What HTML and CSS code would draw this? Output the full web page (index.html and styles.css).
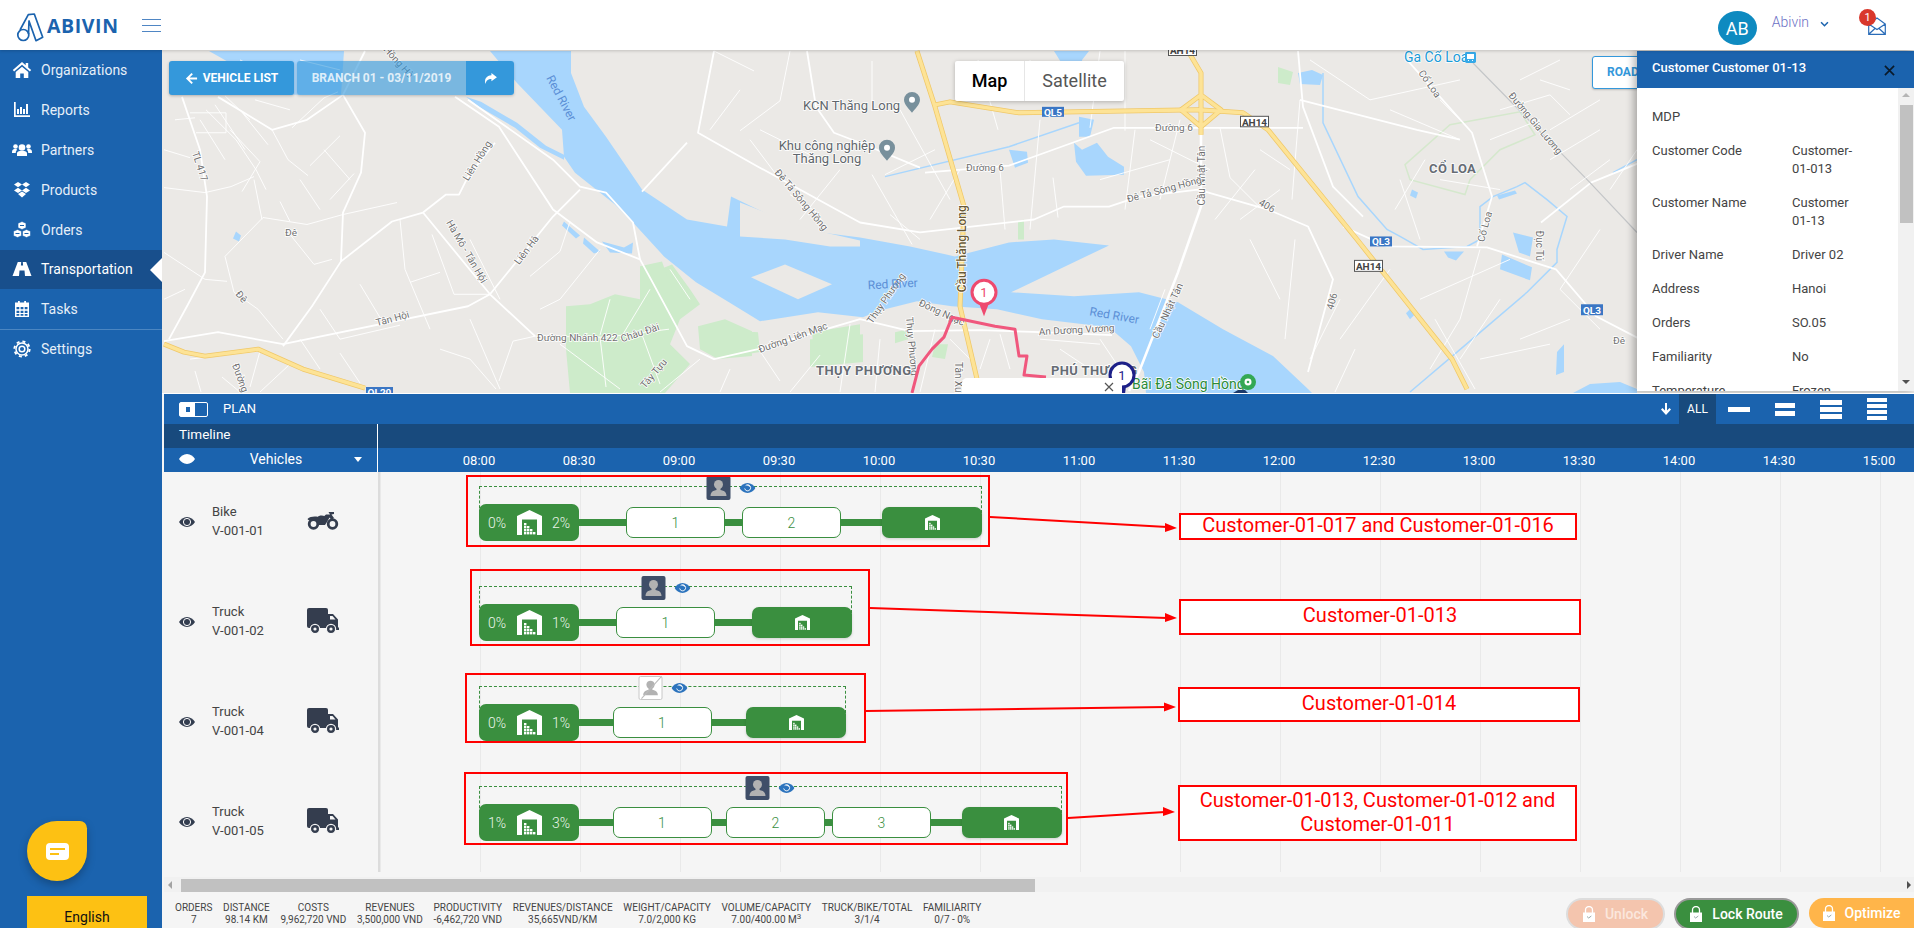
FILE: index.html
```html
<!DOCTYPE html>
<html lang="en">
<head>
<meta charset="utf-8">
<title>Abivin - Transportation</title>
<link rel="stylesheet" href="styles.css">
</head>
<body>
<svg class="defs" width="0" height="0" aria-hidden="true">
  <symbol id="i-eye" viewBox="0 0 16 12"><path d="M8 1C4.5 1 1.8 3.2 0 6c1.8 2.8 4.5 5 8 5s6.200-2.200 8-5c-1.800-2.800-4.500-5-8-5z" fill="currentColor"/><circle cx="8" cy="6" r="3.600" fill="none" stroke="#fff" stroke-width="1"/><circle cx="8" cy="6" r="2.200" fill="currentColor"/></symbol>
  <symbol id="i-eyeb" viewBox="0 0 16 12"><path d="M8 1C4.500 1 1.800 3.200 0 6c1.800 2.800 4.500 5 8 5s6.200-2.200 8-5c-1.800-2.800-4.500-5-8-5z" fill="#2c73bd"/><path d="M5.200 6.500a3 3 0 1 0 1-3M10.500 4.500a3 3 0 0 0-2.500-1" fill="none" stroke="#fff" stroke-width="1"/></symbol>
  <symbol id="i-depot" viewBox="0 0 25 25"><path d="M12.500 0L25 6v19h-5V9.500H5V25H0V6z" fill="#fff"/><g fill="#fff"><rect x="7" y="13" width="2.400" height="2.400"/><rect x="7" y="16" width="2.400" height="2.400"/><rect x="10" y="16" width="2.400" height="2.400"/><rect x="7" y="19" width="2.400" height="2.400"/><rect x="10" y="19" width="2.400" height="2.400"/><rect x="13" y="19" width="2.400" height="2.400"/><rect x="7" y="22" width="2.400" height="2.400"/><rect x="10" y="22" width="2.400" height="2.400"/><rect x="13" y="22" width="2.400" height="2.400"/><rect x="16" y="22" width="2.400" height="2.400"/></g></symbol>
  <symbol id="i-person" viewBox="0 0 24 24"><circle cx="12" cy="8.500" r="4.500" fill="#b2b2b2"/><path d="M4 20c0-4.500 3.500-6 8-6s8 1.500 8 6z" fill="#b2b2b2"/><rect x="10" y="10" width="4" height="6" fill="#b2b2b2"/></symbol>
  <symbol id="i-lock" viewBox="0 0 12 16"><path d="M2.500 7V4a3.500 3.500 0 0 1 7 0v3" fill="none" stroke="#fff" stroke-width="1.300"/><rect y="6.500" width="12" height="9.500" fill="#fff"/><path d="M4 10.500l1.700 1.500L8.300 10" fill="none" stroke="#9aa" stroke-width="1"/></symbol>
  <symbol id="i-truck" viewBox="0 0 32 26"><path d="M2 0h17a2 2 0 0 1 2 2v18H2a2 2 0 0 1-2-2V2a2 2 0 0 1 2-2z" fill="currentColor"/><path d="M21 6h5l5 5.500V19l1 1v2H21z" fill="currentColor"/><path d="M23 8h2.500l3 3.500H23z" fill="#f5f5f5"/><circle cx="8" cy="21" r="4.600" fill="currentColor" stroke="#f5f5f5" stroke-width="1.200"/><circle cx="8" cy="21" r="1.600" fill="#f5f5f5"/><circle cx="24" cy="21" r="4.600" fill="currentColor" stroke="#f5f5f5" stroke-width="1.200"/><circle cx="24" cy="21" r="1.600" fill="#f5f5f5"/></symbol>
  <symbol id="i-bike" viewBox="0 0 32 19"><circle cx="6.500" cy="13" r="4.300" fill="none" stroke="currentColor" stroke-width="2.800"/><circle cx="25.500" cy="13" r="4.300" fill="none" stroke="currentColor" stroke-width="2.800"/><path d="M.5 8C3 5.500 8 5 11 6l4 1 4-3.500h4L21.500 1H27v2l-2.500.5L27 7l-2.500 2-2-2.500L20 11l-2 3h-7c0-3.500-3-5.500-6-5-2 .5-4 .5-4.500-1z" fill="currentColor"/><path d="M10 6.500c2-2.500 6-2.500 8-1l-3 3.500z" fill="currentColor"/></symbol>
</svg>

<header class="topbar">
  <div class="brand">
    <svg class="logo" viewBox="16 8 30 30" width="30" height="30" aria-hidden="true"><circle cx="23.300" cy="31" r="5.500" fill="none" stroke="#1b63ae" stroke-width="1.700"/><path d="M20 26L28.300 10.700 34.300 10 42.700 33.300 36 36.700 29 17 28.500 30" fill="none" stroke="#1b63ae" stroke-width="1.700" stroke-linejoin="round"/></svg>
    <span class="brand-name">ABIVIN</span>
    <span class="burger"><i></i><i></i><i></i></span>
  </div>
  <div class="account">
    <span class="avatar">AB</span>
    <span class="username">Abivin</span>
    <svg class="chev" viewBox="0 0 10 7" width="9" height="6" aria-hidden="true"><path d="M1 1.500l4 4 4-4" fill="none" stroke="#1b63ae" stroke-width="1.800"/></svg>
    <span class="mail">
      <svg viewBox="0 0 18 18" width="18" height="18" aria-hidden="true"><path d="M.7 17.300V7L9 1l8.300 6v10.300zM.7 7L9 12.500 17.300 7M.7 17.300L7 11.500M17.300 17.300L11 11.500" fill="none" stroke="#2a6cb8" stroke-width="1.200"/></svg>
      <b class="badge">1</b>
    </span>
  </div>
</header>

<div class="layout">
  <aside class="sidebar">
    <nav class="nav">
      <a class="nav-item"><svg class="nav-ic" viewBox="0 0 20 20" aria-hidden="true"><path d="M10 2L.8 10l1.300 1.500L10 4.800l7.900 6.700 1.300-1.500-3-2.600V3h-2.500v2.200zM3.700 12L10 6.700l6.300 5.300v6h-4.500v-4.500H8.200V18H3.700z"/></svg>Organizations</a>
      <a class="nav-item"><svg class="nav-ic" viewBox="0 0 20 20" aria-hidden="true"><path d="M2 2h1.700v13.300H18V17H2zM5 9h2v5H5zM8 7h2v7H8zM11 9h2v5h-2zM14 4h2v10h-2z"/></svg>Reports</a>
      <a class="nav-item"><svg class="nav-ic" viewBox="0 0 20 20" aria-hidden="true"><circle cx="10" cy="7.500" r="3.300"/><circle cx="3.500" cy="6.500" r="2.300"/><circle cx="16.500" cy="6.500" r="2.300"/><path d="M5 16v-2.500C5 11.500 6.500 11 10 11s5 .5 5 2.500V16zM0 12c0-2.500 1.500-3 4-3 .5 0 1 .5 1.200 1C4 10.500 3.800 11.500 3.800 13H0zM20 12c0-2.500-1.500-3-4-3-.5 0-1 .5-1.200 1 1.200.5 1.400 1.500 1.400 3H20z"/></svg>Partners</a>
      <a class="nav-item"><svg class="nav-ic" viewBox="0 0 20 20" aria-hidden="true"><path d="M6 2l4 2.600L6 7.200 2 4.600zM14 2l4 2.600-4 2.600-4-2.600zM6 7.800l4 2.600-4 2.600-4-2.600zM14 7.800l4 2.600-4 2.600-4-2.600zM6 14l4-2.500 4 2.500-4 3.500z"/></svg>Products</a>
      <a class="nav-item"><svg class="nav-ic" viewBox="0 0 20 20" aria-hidden="true"><path d="M10 1.500l4 1.700v4.600l-4 1.700-4-1.700V3.200zM5.500 9.500l4 1.700v4.600l-4 1.700-4-1.700v-4.600zM14.500 9.500l4 1.700v4.600l-4 1.700-4-1.700v-4.600z" stroke="#1b63ae" stroke-width=".600"/><path d="M8 5.500h4M3.500 13.500h4M12.500 13.500h4" stroke="#1b63ae" stroke-width="1"/></svg>Orders</a>
      <a class="nav-item active"><svg class="nav-ic" viewBox="0 0 20 20" aria-hidden="true"><path d="M5.800 3h3.400l-.3 3.500h2.200L10.800 3h3.400L19.500 17h-6.500l-.5-5.500h-5L7 17H.5z"/></svg>Transportation</a>
      <a class="nav-item tasks"><svg class="nav-ic" viewBox="0 0 20 20" aria-hidden="true"><path fill-rule="evenodd" d="M3 3.500h3V2h1.800v1.500h4.400V2H14v1.500h3V18H3zM4.500 8v2.300h2.800V8zM8.600 8v2.300h2.800V8zM12.700 8v2.300h2.800V8zM4.500 11.700V14h2.800v-2.300zM8.600 11.700V14h2.800v-2.300zM12.700 11.700V14h2.800v-2.300zM4.500 15v1.700h2.800V15zM8.600 15v1.700h2.800V15zM12.700 15v1.700h2.800V15z"/></svg>Tasks</a>
      <a class="nav-item settings"><svg class="nav-ic" viewBox="0 0 20 20" aria-hidden="true"><circle cx="10" cy="10" r="6" fill="none" stroke="#fff" stroke-width="1.500"/><circle cx="10" cy="10" r="7.600" fill="none" stroke="#fff" stroke-width="2" stroke-dasharray="3 3"/><circle cx="10" cy="10" r="2.800" fill="none" stroke="#fff" stroke-width="1.500"/></svg>Settings</a>
    </nav>
    <button class="chat" type="button" aria-label="Chat"><svg viewBox="0 0 23 17" width="23" height="17" aria-hidden="true"><rect width="23" height="17" rx="4" fill="#fff"/><path d="M4 6h15" stroke="#fdc113" stroke-width="2"/><path d="M4 11h9" stroke="#fdc113" stroke-width="2"/></svg></button>
    <div class="lang">English</div>
  </aside>

  <main class="main">
    <section class="map">
      <svg class="map-svg" viewBox="162 50 1752 344" preserveAspectRatio="none">
        <rect x="162" y="50" width="1752" height="344" fill="#ebe9e6"/>
        <g class="green">
          <path d="M566 307L590 305 615 295 640 300 660 270 672 265 690 290 700 305 680 320 670 345 690 365 665 394 570 394 566 350z"/>
          <path d="M640 267L662 262 672 290 650 305 640 300zM698 327L725 320 752 332 752 357 718 360 700 350zM714 330L758 333 760 353 718 360zM812 333L860 325 860 360 815 365zM810 340L863 335 863 363 810 368zM895 333L908 330 908 340 895 344zM1018 222L1024 220 1024 240 1018 240z"/>
          <path d="M935 345L948 345 945 360 932 358zM1278 67L1293 72 1290 85 1278 83z"/>
          <path d="M1405 165L1450 125 1520 112 1535 135 1500 150 1470 180 1465 195 1410 180z" class="ring"/>
        </g>
        <g class="water">
          <path d="M490 51L571 51 571 73 584 107 606 137 642 190 687 220 727 227 731 197 758 210 798 230 860 238 910 247 955 257 1009 243 1054 240 1109 246 1011 293 1074 297 1139 293 1178 303 1223 330 1273 357 1308 390 1312 394 1146 394 1144 373 1131 347 1109 328 1042 320 997 310 952 307 917 302 877 312 863 318 818 313 760 322 729 303 696 283 664 257 633 223 615 205 575 173 564 157 562 130 517 83z"/>
          <path d="M209 51L344 51 341 95 286 95z"/>
          <path d="M466 97L481 102 517 123 546 146 564 155 564 160 540 148 515 128 479 107z"/>
          <path d="M1074 143L1082 150 1097 143 1108 157 1124 167 1124 175 1086 176 1076 162zM1054 51L1089 51 1082 60 1083 68 1067 72zM1079 117L1094 120 1090 137 1079 137zM1009 150L1027 152 1028 163 1015 168zM1298 73L1312 70 1323 75 1320 85 1300 84zM1513 233L1533 238 1530 257 1519 253zM1502 255L1532 268 1530 281 1500 270zM1557 353L1564 345 1564 373 1556 376zM564 222L580 236 576 239 562 226zM584 238L600 252 594 254 583 244zM602 242L624 248 633 243 632 254 610 253zM1573 394L1590 385 1620 383 1637 390 1637 394z"/>
          <path d="M1444 252L1464 252 1456 261 1448 258zM1497 196L1515 191 1517 194 1499 200zM1412 190L1418 193 1416 199 1410 196zM1410 310L1414 316 1410 320 1406 314zM236 232L241 236 239 242 233 239z"/>
        </g>
        <g class="land">
          <path d="M751 278L785 265 832 285 798 300z"/>
          <path d="M740 203L763 212 807 229 860 241 860 247 830 247 785 240 740 237z"/>
        </g>
        <g class="canal">
          <path d="M885 177L1009 147 1079 123"/>
          <path d="M1323 73L1323 123 1358 197 1387 230 1400 237 1423 250 1467 247 1480 240 1480 207 1493 197 1517 187 1525 183 1547 200 1567 217 1557 250 1557 263 1527 293 1457 353 1410 393"/>
          <path d="M1613 173L1637 160"/>
        </g>
        <g class="rd2">
          <path d="M182 97L200 150 207 197 205 273 187 307 169 340"/>
          <path d="M218 97L272 130 307 120 343 95 365 51"/>
          <path d="M343 95L365 133 361 173 343 213 341 262 312 307 283 347"/>
          <path d="M341 262L392 222 423 213 446 195 459 195 468 177 495 143"/>
          <path d="M423 213L490 295 535 337"/>
          <path d="M164 342L218 333 283 345 468 307 490 295 553 217 580 190"/>
          <path d="M455 97L499 127 553 210 597 243 640 260 651 280 687 347 714 360 758 350 860 320 910 332 980 331 1040 333 1112 336"/>
          <path d="M468 100L553 160 580 187 606 193 633 223 640 260"/>
          <path d="M714 51L698 133 758 167 860 223 920 233 1034 220 1064 207 1109 207 1139 197 1198 190 1268 210 1308 227 1333 280 1308 373"/>
          <path d="M807 51L816 107 834 133 860 143 920 168"/>
          <path d="M925 173L1009 166 1114 128 1303 128"/>
          <path d="M1343 227L1387 247 1487 248 1556 270 1596 317 1640 340"/>
          <path d="M1407 60L1472 133 1492 197 1477 247"/>
          <path d="M1541 223L1591 183 1640 163"/>
          <path d="M1298 51L1303 107 1333 187 1363 217"/>
          <path d="M1300 100L1417 130 1460 140"/>
          <path d="M687 143L642 192"/>
        </g>
        <g class="rd3">
          <path d="M1201 133L1201 207 1178 273 1139 373 1129 392"/>
        </g>
        <path class="gray-rd" d="M1473 63L1590 183 1637 233"/>
        <g class="rd">
          <path d="M164 188L205 193 231 187 254 177M164 253L205 280 227 282M225 257L263 218 307 225 343 215 397 203M225 257L234 293 258 310 283 340"/>
          <path d="M535 337L606 338 669 330M535 337L513 342 499 382M490 295L454 295 432 235M500 300L470 240M600 338L606 388M640 330L660 385"/>
          <path d="M206 110L236 140 256 170 266 190M190 113L226 113 226 133 196 133M230 130L260 162 242 192M292 128L324 98 338 92M272 130L288 160 308 176M310 166L340 136M324 150L350 180M330 200L354 174M290 235L314 265 332 260M262 220L254 180M300 180L320 210"/>
          <path d="M215 105L245 150M200 120L225 160M240 110L268 145M175 120L195 118M225 96L250 120M164 150L190 158M164 300L185 290M300 60L340 70M240 60L280 80M170 70L205 75M255 100L290 110"/>
          <path d="M290 222L280 202M400 220L405 270 430 330M410 283L440 273M360 285L384 325M320 310L340 340 400 326M300 340L320 370M340 354L360 384M260 352L250 388M190 360L260 352M195 372L201 393M222 378L240 393M290 365L260 393M440 350L470 360 496 390M470 320L500 390"/>
          <path d="M570 222L560 252 530 277M600 250L560 300 540 310M650 290L620 340M610 300L600 336M690 300L670 270M700 360L660 393M560 345L620 390M730 370L720 393M760 352L780 382M820 356L790 393M850 325L840 393M880 340L875 393M935 330L920 393"/>
          <path d="M714 51L754 71M740 90L710 130M790 51L780 101 740 131M760 130L820 160M780 180L750 140M820 215L790 195M840 170L800 220M872 175L912 245M900 110L950 200M890 215L920 240M872 61L872 111M935 150L885 175M960 170L930 220M978 60L998 130M1000 170L1005 230M1040 120L1030 230M1058 218L1053 178M1030 60L1035 100M1100 51L1090 128M1125 51L1125 131M1135 130L1125 210M1150 140L1210 170M1180 120L1160 200M1220 128L1230 178 1260 208M1255 170L1215 220M1280 190L1240 220M1290 170L1260 150M1100 180L1170 160"/>
          <path d="M1300 100L1292 200M1370 100L1460 80M1310 60L1370 100M1390 110L1460 140M1425 160L1395 210M1440 180L1500 190M1440 100L1470 130M1500 110L1550 95 1570 115M1540 120L1490 140M1560 60L1520 80M1570 90L1540 80M1600 100L1550 130M1600 130L1550 160M1570 190L1610 160M1610 190L1637 150M1400 180L1420 240M1480 250L1460 320 1430 370M1420 300L1510 260M1500 300L1460 360M1520 340L1570 320M1560 290L1600 330M1480 360L1550 345M1435 320L1475 390M1390 270L1340 340M1600 230L1560 290"/>
          <path d="M1150 330L1165 290M1250 240L1280 300M1295 240L1285 340M1340 300L1310 360M1355 350L1335 393"/>
          <path d="M1000 335L1010 370M1040 340L1100 345M1060 350L1090 370M1100 340L1120 370M950 340L970 360M990 340L980 370"/>
        </g>
        <g class="hw-o">
          <path d="M164 345L184 353 205 357 258 350 303 370 365 389"/>
          <path d="M917 51L935 107 964 207 960 307 977 380"/>
          <path d="M935 105L950 102 1019 113 1198 110 1243 113 1268 130 1357 240 1452 360 1467 390"/>
          <path d="M1188 51L1201 73 1201 110M1181 110L1201 95 1221 110 1201 127zM1201 95L1201 135"/>
        </g>
        <g class="hw">
          <path d="M164 345L184 353 205 357 258 350 303 370 365 389"/>
          <path d="M917 51L935 107 964 207 960 307 977 380"/>
          <path d="M935 105L950 102 1019 113 1198 110 1243 113 1268 130 1357 240 1452 360 1467 390"/>
          <path d="M1188 51L1201 73 1201 110M1181 110L1201 95 1221 110 1201 127zM1201 95L1201 135"/>
        </g>
        <g class="shield-b">
          <rect x="1042" y="107" width="22" height="10"/><rect x="1370" y="237" width="22" height="10"/><rect x="1581" y="305" width="22" height="11"/><rect x="366" y="388" width="27" height="6"/>
        </g>
        <g class="shield-w">
          <rect x="1240.500" y="116.500" width="28" height="10.500"/><rect x="1354.500" y="261" width="28" height="11"/><rect x="1168.500" y="47" width="28" height="8.500"/>
        </g>
        <g class="sh-t sh-tw">
          <text x="1053" y="116">QL5</text><text x="1381" y="246">QL3</text><text x="1592" y="315">QL3</text><text x="379.500" y="397">QL20</text>
        </g>
        <g class="sh-t sh-td">
          <text x="1254.500" y="126">AH14</text><text x="1368.500" y="271">AH14</text><text x="1182.500" y="54">AH14</text>
        </g>
        <g class="lb">
          <text transform="translate(383 50) rotate(48)">Hồng Hà</text>
          <text transform="translate(192 153) rotate(72)">TL 417</text>
          <text transform="translate(468 182) rotate(-58)">Liên Hồng</text>
          <text transform="translate(446 223) rotate(60)">Hà Mô - Tân Hội</text>
          <text transform="translate(519 266) rotate(-53)">Liên Hà</text>
          <text x="285" y="237">Đê</text>
          <text transform="translate(235 295) rotate(50)">Đê</text>
          <text transform="translate(377 327) rotate(-15)">Tân Hội</text>
          <text transform="translate(232 366) rotate(70)">Đường đ</text>
          <text x="537" y="342">Đường Nhánh 422</text>
          <text transform="translate(622 343) rotate(-18)">Châu Đài</text>
          <text transform="translate(645 390) rotate(-50)">Tây Tựu</text>
          <text transform="translate(760 354) rotate(-20)">Đường Liên Mạc</text>
          <text transform="translate(774 173) rotate(50)">Đê Tả Sông Hồng</text>
          <text transform="translate(872 325) rotate(-55)">Thụy Phương</text>
          <text transform="translate(918 306) rotate(25)">Đông Ngạc</text>
          <text transform="translate(906 318) rotate(85)">Thụy Phương</text>
          <text transform="translate(955 363) rotate(90)">Tân Xuân</text>
          <text transform="translate(1039 336) rotate(-3)">An Dương Vương</text>
          <text transform="translate(1158 340) rotate(-65)">Cầu Nhật Tân</text>
          <text transform="translate(1205 206) rotate(-90)">Cầu Nhật Tân</text>
          <text transform="translate(1128 203) rotate(-15)">Đê Tả Sông Hồng</text>
          <text x="1155" y="131">Đường 6</text>
          <text x="966" y="171">Đường 6</text>
          <text transform="translate(1258 205) rotate(30)">406</text>
          <text transform="translate(1333 311) rotate(-75)">406</text>
          <text transform="translate(1418 73) rotate(55)">Cổ Loa</text>
          <text transform="translate(1484 243) rotate(-75)">Cổ Loa</text>
          <text transform="translate(1508 96) rotate(50)">Đường Gia Lương</text>
          <text transform="translate(1536 231) rotate(90)">Đục Tú</text>
          <text x="1613" y="345">Đê</text>
        </g>
        <text class="lb-dark" transform="translate(966 293) rotate(-90)">Cầu Thăng Long</text>
        <g class="lb-water">
          <text transform="translate(546 78) rotate(62)">Red River</text>
          <text transform="translate(868 290) rotate(-3)">Red River</text>
          <text transform="translate(1089 316) rotate(10)">Red River</text>
        </g>
        <g class="lb-place">
          <text x="816" y="376">THỤY PHƯƠNG</text>
          <text x="1051" y="376">PHÚ THƯỢNG</text>
          <text x="1429" y="173">CỔ LOA</text>
        </g>
        <g class="lb-poi">
          <text x="803" y="110">KCN Thăng Long</text>
          <text class="mid" x="827" y="150">Khu công nghiệp</text>
          <text class="mid" x="827" y="163">Thăng Long</text>
        </g>
        <path class="poi-pin" d="M912 92a8 8 0 0 1 8 8c0 5-5 9-8 13-3-4-8-8-8-13a8 8 0 0 1 8-8z"/><circle cx="912" cy="100" r="3" fill="#fff"/>
        <path class="poi-pin" d="M887 140a8 8 0 0 1 8 8c0 5-5 9-8 13-3-4-8-8-8-13a8 8 0 0 1 8-8z"/><circle cx="887" cy="148" r="3" fill="#fff"/>
        <text class="lb-ga" x="1404" y="62">Ga Cổ Loa</text>
        <rect x="1465" y="52" width="11" height="11" rx="1.500" fill="#35a9e8"/><rect x="1467" y="54" width="7" height="5" fill="#fff"/><path d="M1468 60.500h1M1472 60.500h1" stroke="#fff"/>
        <text class="lb-green" x="1132" y="390">Bãi Đá Sông Hồng</text>
        <circle cx="1248" cy="383" r="8" fill="#34a853"/><circle cx="1248" cy="383" r="3.500" fill="#fff"/><circle cx="1248" cy="383" r="1.300" fill="#34a853"/>
        <path d="M1233 394l5-3 7 0 3 3z" fill="#1c3a6b"/>
        <polyline class="route" points="912,394 919,367 932,350 944,338 952,318 995,327 1015,330 1019,357 1027,357 1024,376 1046,378"/>
        <circle cx="984" cy="293" r="12" fill="#fff" stroke="#ee4a6f" stroke-width="3"/>
        <path d="M979 304h10l-5 13z" fill="#ee4a6f"/>
        <text class="pin-t pin-pink" x="984" y="298">1</text>
        <circle cx="1122" cy="376" r="12" fill="#fff" stroke="#1d2088" stroke-width="3"/>
        <path d="M1118 387h8l-1 8h-6z" fill="#1d2088"/>
        <text class="pin-t pin-navy" x="1122" y="381">1</text>
        <path d="M962 394v-10a5 5 0 0 1 5-5h150l5 5v10z" fill="#fff"/>
        <path d="M1105 384l8 8m0-8l-8 8" stroke="#555" stroke-width="1.200"/>
      </svg>

      <div class="map-btns">
        <button class="mb mb-solid" type="button"><svg viewBox="0 0 14 14" width="13" height="13" aria-hidden="true"><path d="M7 1L1 7l6 6 1.500-1.500L5 8h8V6H5l3.500-3.500z" fill="#fff"/></svg>VEHICLE LIST</button>
        <div class="mb-group">
          <span class="mb mb-fade">BRANCH 01 - 03/11/2019</span>
          <button class="mb mb-icon" type="button" aria-label="Share"><svg viewBox="0 0 14 12" width="13" height="11" aria-hidden="true"><path d="M8 0l6 4.500L8 9V6.500C4 6.500 2.500 8 1.500 12 0 6.500 2.500 3 8 2.500z" fill="#fff"/></svg></button>
        </div>
      </div>

      <div class="maptype"><span class="mt-on">Map</span><span class="mt-off">Satellite</span></div>
      <div class="road-btn">ROAD</div>

      <aside class="panel">
        <div class="panel-head"><span>Customer Customer 01-13</span><svg viewBox="0 0 12 12" width="11" height="11" aria-hidden="true"><path d="M1 1l10 10M11 1L1 11" stroke="#0a1a2a" stroke-width="1.800"/></svg></div>
        <div class="panel-wrap">
          <dl class="panel-body">
            <div class="field"><dt>MDP</dt><dd></dd></div>
            <div class="field"><dt>Customer Code</dt><dd>Customer-01-013</dd></div>
            <div class="field"><dt>Customer Name</dt><dd>Customer 01-13</dd></div>
            <div class="field"><dt>Driver Name</dt><dd>Driver 02</dd></div>
            <div class="field"><dt>Address</dt><dd>Hanoi</dd></div>
            <div class="field"><dt>Orders</dt><dd>SO.05</dd></div>
            <div class="field"><dt>Familiarity</dt><dd>No</dd></div>
            <div class="field"><dt>Temperature</dt><dd>Frozen</dd></div>
          </dl>
          <div class="vscroll"><i class="up"></i><b></b><i class="down"></i></div>
        </div>
      </aside>
    </section>

    <section class="plan">
      <div class="plan-bar">
        <span class="toggle"><i></i></span>
        <span class="plan-title">PLAN</span>
        <div class="plan-tools">
          <svg class="down" viewBox="0 0 12 12" width="12" height="12" aria-hidden="true"><path d="M6 12L1 6.500l1.500-1.500L5 7.500V0h2v7.500L9.500 5 11 6.500z" fill="#fff"/></svg>
          <span class="all">ALL</span>
          <span class="density d1"><i></i></span>
          <span class="density d2"><i></i><i></i></span>
          <span class="density d3"><i></i><i></i><i></i></span>
          <span class="density d4"><i></i><i></i><i></i><i></i></span>
        </div>
      </div>
      <div class="tl-head"><div class="tl-left">Timeline</div></div>
      <div class="tl-hours">
        <div class="vh-left">
          <svg class="vh-eye" width="16" height="12" aria-hidden="true"><use href="#i-eye"/></svg>
          <span>Vehicles</span>
          <i class="caret"></i>
        </div>
        <div class="hours">
          <span>08:00</span><span>08:30</span><span>09:00</span><span>09:30</span><span>10:00</span><span>10:30</span><span>11:00</span><span>11:30</span><span>12:00</span><span>12:30</span><span>13:00</span><span>13:30</span><span>14:00</span><span>14:30</span><span>15:00</span>
        </div>
      </div>

      <div class="rows">
        <div class="row">
          <div class="veh"><svg class="veh-eye" width="16" height="12" aria-hidden="true"><use href="#i-eye"/></svg><div class="veh-name">Bike<br>V-001-01</div><svg class="veh-ic bike" width="32" height="19" aria-hidden="true"><use href="#i-bike"/></svg></div>
          <div class="track"><div class="route-line">
            <div class="driver"><span class="ava"><svg width="24" height="24" aria-hidden="true"><use href="#i-person"/></svg></span><svg class="drv-eye" width="16" height="12" aria-hidden="true"><use href="#i-eyeb"/></svg></div>
            <div class="depot"><span>0%</span><svg width="25" height="25" aria-hidden="true"><use href="#i-depot"/></svg><span>2%</span></div>
            <i class="link" style="width:47px"></i><div class="stop">1</div><i class="link" style="width:17px"></i><div class="stop">2</div><i class="link" style="width:41px"></i>
            <div class="depot-end"><svg width="15" height="15" aria-hidden="true"><use href="#i-depot"/></svg></div>
          </div></div>
        </div>
        <div class="row">
          <div class="veh"><svg class="veh-eye" width="16" height="12" aria-hidden="true"><use href="#i-eye"/></svg><div class="veh-name">Truck<br>V-001-02</div><svg class="veh-ic" width="32" height="26" aria-hidden="true"><use href="#i-truck"/></svg></div>
          <div class="track"><div class="route-line">
            <div class="driver"><span class="ava"><svg width="24" height="24" aria-hidden="true"><use href="#i-person"/></svg></span><svg class="drv-eye" width="16" height="12" aria-hidden="true"><use href="#i-eyeb"/></svg></div>
            <div class="depot"><span>0%</span><svg width="25" height="25" aria-hidden="true"><use href="#i-depot"/></svg><span>1%</span></div>
            <i class="link" style="width:37px"></i><div class="stop">1</div><i class="link" style="width:37px"></i>
            <div class="depot-end"><svg width="15" height="15" aria-hidden="true"><use href="#i-depot"/></svg></div>
          </div></div>
        </div>
        <div class="row">
          <div class="veh"><svg class="veh-eye" width="16" height="12" aria-hidden="true"><use href="#i-eye"/></svg><div class="veh-name">Truck<br>V-001-04</div><svg class="veh-ic" width="32" height="26" aria-hidden="true"><use href="#i-truck"/></svg></div>
          <div class="track"><div class="route-line">
            <div class="driver"><span class="ava ava-none"><svg width="22" height="22" aria-hidden="true"><use href="#i-person"/></svg></span><svg class="drv-eye" width="16" height="12" aria-hidden="true"><use href="#i-eyeb"/></svg></div>
            <div class="depot"><span>0%</span><svg width="25" height="25" aria-hidden="true"><use href="#i-depot"/></svg><span>1%</span></div>
            <i class="link" style="width:33.500px"></i><div class="stop">1</div><i class="link" style="width:34.500px"></i>
            <div class="depot-end"><svg width="15" height="15" aria-hidden="true"><use href="#i-depot"/></svg></div>
          </div></div>
        </div>
        <div class="row">
          <div class="veh"><svg class="veh-eye" width="16" height="12" aria-hidden="true"><use href="#i-eye"/></svg><div class="veh-name">Truck<br>V-001-05</div><svg class="veh-ic" width="32" height="26" aria-hidden="true"><use href="#i-truck"/></svg></div>
          <div class="track"><div class="route-line">
            <div class="driver"><span class="ava"><svg width="24" height="24" aria-hidden="true"><use href="#i-person"/></svg></span><svg class="drv-eye" width="16" height="12" aria-hidden="true"><use href="#i-eyeb"/></svg></div>
            <div class="depot"><span>1%</span><svg width="25" height="25" aria-hidden="true"><use href="#i-depot"/></svg><span>3%</span></div>
            <i class="link" style="width:33.500px"></i><div class="stop">1</div><i class="link" style="width:14.500px"></i><div class="stop">2</div><i class="link" style="width:7px"></i><div class="stop">3</div><i class="link" style="width:30.500px"></i>
            <div class="depot-end"><svg width="15" height="15" aria-hidden="true"><use href="#i-depot"/></svg></div>
          </div></div>
        </div>

        <svg class="arrows" viewBox="164 472 1750 400" width="1750" height="400" aria-hidden="true">
          <path d="M990 517L1167 527M870 608L1167 618M866 711L1166 707M1068 818L1165 812" stroke="#f00" stroke-width="2" fill="none"/>
          <path d="M1177 528l-12-5v9zM1177 618l-12-5v9zM1176 707l-12-4.500v9zM1175 812l-12-5v9z" fill="#f00"/>
        </svg>
        <div class="mark m1"></div><div class="mark m2"></div><div class="mark m3"></div><div class="mark m4"></div>
        <div class="note n1">Customer-01-017 and Customer-01-016</div>
        <div class="note n2">Customer-01-013</div>
        <div class="note n3">Customer-01-014</div>
        <div class="note n4">Customer-01-013, Customer-01-012 and Customer-01-011</div>
      </div>

      <div class="hscroll"><i class="h-left"></i><b></b><i class="h-right"></i></div>

      <footer class="stats-bar">
        <div class="stats">
          <div class="stat"><span>ORDERS</span><span>7</span></div>
          <div class="stat"><span>DISTANCE</span><span>98.14 KM</span></div>
          <div class="stat"><span>COSTS</span><span>9,962,720 VND</span></div>
          <div class="stat"><span>REVENUES</span><span>3,500,000 VND</span></div>
          <div class="stat"><span>PRODUCTIVITY</span><span>-6,462,720 VND</span></div>
          <div class="stat"><span>REVENUES/DISTANCE</span><span>35,665VND/KM</span></div>
          <div class="stat"><span>WEIGHT/CAPACITY</span><span>7.0/2,000 KG</span></div>
          <div class="stat"><span>VOLUME/CAPACITY</span><span>7.00/400.00 M<sup>3</sup></span></div>
          <div class="stat"><span>TRUCK/BIKE/TOTAL</span><span>3/1/4</span></div>
          <div class="stat"><span>FAMILIARITY</span><span>0/7 - 0%</span></div>
        </div>
        <div class="actions">
          <button class="act act-unlock" type="button"><svg width="12" height="16" aria-hidden="true"><use href="#i-lock"/></svg>Unlock</button>
          <button class="act act-lock" type="button"><svg width="12" height="16" aria-hidden="true"><use href="#i-lock"/></svg>Lock Route</button>
          <button class="act act-opt" type="button"><svg width="12" height="16" aria-hidden="true"><use href="#i-lock"/></svg>Optimize</button>
        </div>
      </footer>
    </section>
  </main>
</div>
</body>
</html>
```

FILE: styles.css
```css
* { box-sizing: border-box; }
html, body { margin: 0; height: 100%; overflow: hidden; }
body { font-family: Roboto, "Noto Sans", sans-serif; font-size: 13px; color: #333; background: #fff; }
.defs { position: absolute; }
button { font-family: inherit; border: 0; padding: 0; cursor: pointer; }

/* top bar */
.topbar { height: 50px; display: flex; justify-content: space-between; align-items: center; background: #fff; position: relative; z-index: 3; box-shadow: 0 1px 3px rgba(0,0,0,.18); }
.brand { display: flex; align-items: center; padding-left: 16px; }
.logo { width: 30px; height: 30px; margin-top: 3px; }
.brand-name { margin-left: 1px; font-family: "Open Sans", sans-serif; font-weight: 700; font-size: 19.500px; letter-spacing: .6px; color: #1b63ae; width: 95px; }
.burger { display: flex; flex-direction: column; gap: 5px; width: 19px; }
.burger i { display: block; height: 1px; background: #4f86c4; }
.account { display: flex; align-items: center; }
.avatar { width: 39px; height: 34px; border-radius: 50%; background: #0e8ac0; color: #fff; font-size: 18px; display: flex; align-items: center; justify-content: center; margin-top: 6px; }
.username { margin-left: 15px; font-size: 14px; font-weight: 300; color: #6b6fc4; margin-top: -6px; }
.chev { margin-left: 11px; margin-top: -3px; }
.mail { position: relative; display: block; margin: 1px 28px 0 39px; width: 18px; height: 18px; }
.mail svg { display: block; }
.badge { position: absolute; left: -9px; top: -8px; width: 17px; height: 17px; border-radius: 50%; background: #d9382c; color: #fff; font-size: 11px; font-weight: 400; display: flex; align-items: center; justify-content: center; }

.layout { display: flex; height: 878px; }

/* sidebar */
.sidebar { width: 162px; flex: none; background: #1b63ae; display: flex; flex-direction: column; }
.nav { display: flex; flex-direction: column; }
.nav-item { height: 40px; display: flex; align-items: center; font-size: 14px; color: #e6eff8; position: relative; }
.nav-ic { width: 20px; height: 20px; margin: 0 9px 0 12px; fill: #fff; flex: none; }
.nav-item.active { background: #184f8c; color: #fff; height: 39px; margin-bottom: 1px; padding-bottom: 1px; }
.nav-item.active::after { content: ""; position: absolute; right: 0; top: 8px; border: 12px solid transparent; border-left: 0; border-right-color: #fff; border-right-width: 12px; }
.tasks { padding-bottom: 2px; }
.settings { border-top: 1px solid #4b86c2; margin-top: -1px; padding-bottom: 2px; }
.chat { margin: auto 0 15px 27px; width: 60px; height: 60px; border-radius: 50% 12% 50% 50%; background: #fdc113; display: flex; align-items: center; justify-content: center; box-shadow: 0 4px 8px rgba(0,0,0,.25); }
.lang { margin-left: 27px; width: 120px; height: 32px; background: #fdc113; color: #111; font-size: 14px; text-align: center; line-height: 42px; overflow: hidden; }

.main { flex: 1; min-width: 0; background: #f5f5f5; display: flex; flex-direction: column; }

/* map */
.map { height: 344px; position: relative; overflow: hidden; border-bottom: 1px solid #fff; flex: none; }
.map-svg { display: block; width: 100%; height: 343px; }
.green path { fill: #cdebca; }
.green .ring { fill: none; stroke: #d5e8cd; stroke-width: 1.500; }
.water path { fill: #a8d6fd; }
.land path { fill: #ebe9e6; }
.canal path { fill: none; stroke: #a8d6fd; stroke-width: 1.500; }
.rd2 path { fill: none; stroke: #fff; stroke-width: 1.800; stroke-linejoin: round; }
.rd3 path { fill: none; stroke: #fff; stroke-width: 2.600; }
.rd path { fill: none; stroke: #fff; stroke-width: .900; }
.gray-rd { fill: none; stroke: #c4c6c8; stroke-width: 1.200; }
.hw-o path { fill: none; stroke: #f0c868; stroke-width: 5; stroke-linejoin: round; }
.hw path { fill: none; stroke: #fde396; stroke-width: 3.500; stroke-linejoin: round; }
.shield-b rect { fill: #3a76c4; }
.shield-w rect { fill: #fff; stroke: #555; stroke-width: 1; }
.sh-t text { font: 700 10px Roboto, sans-serif; text-anchor: middle; }
.sh-tw text { fill: #fff; }
.sh-td text { fill: #444; }
.lb text { font: 400 10px Roboto, sans-serif; fill: #6f6f6f; stroke: #fff; stroke-width: 1.500px; paint-order: stroke; }
.lb-dark { font: 500 12px Roboto, sans-serif; fill: #6a5a35; stroke: #fff; stroke-width: 1.500px; paint-order: stroke; }
.lb-water text { font: 400 12px Roboto, sans-serif; fill: #5b8fd6; }
.lb-place text { font: 700 13px Roboto, sans-serif; fill: #666c74; letter-spacing: .4px; stroke: #fff; stroke-width: 1.500px; paint-order: stroke; }
.lb-poi text { font: 400 13px Roboto, sans-serif; fill: #60666c; stroke: #fff; stroke-width: 1.500px; paint-order: stroke; }
.lb-poi .mid { text-anchor: middle; }
.poi-pin { fill: #78909c; }
.lb-ga { font: 400 14px Roboto, sans-serif; fill: #1a9bd7; stroke: #fff; stroke-width: 1.500px; paint-order: stroke; }
.lb-green { font: 400 14px Roboto, sans-serif; fill: #2a8a3a; stroke: #fff; stroke-width: 1.500px; paint-order: stroke; }
.route { fill: none; stroke: #f0577d; stroke-width: 3; stroke-linejoin: round; }
.pin-t { font: 400 13px Roboto, sans-serif; text-anchor: middle; }
.pin-pink { fill: #ee4a6f; }
.pin-navy { fill: #1d2088; }

.map-btns { position: absolute; left: 7px; top: 11px; display: flex; gap: 3px; }
.mb { height: 34px; display: flex; align-items: center; justify-content: center; color: #fff; font-size: 12px; font-weight: 700; }
.mb svg { margin-right: 5px; }
.mb-solid { width: 125px; background: #3498db; border-radius: 3px; box-shadow: 0 1px 3px rgba(0,0,0,.25); }
.mb-group { display: flex; border-radius: 3px; overflow: hidden; box-shadow: 0 1px 3px rgba(0,0,0,.2); }
.mb-fade { width: 169px; background: rgba(52,152,219,.62); color: rgba(255,255,255,.8); }
.mb-icon { width: 48px; background: #3498db; }
.mb-icon svg { margin: 0; }

.maptype { position: absolute; left: 793px; top: 11px; height: 40px; display: flex; background: #fff; border-radius: 2px; box-shadow: 0 1px 4px rgba(0,0,0,.25); font-size: 18px; line-height: 40px; }
.mt-on { width: 70px; text-align: center; color: #000; font-weight: 500; border-right: 1px solid #e6e6e6; }
.mt-off { width: 99px; text-align: center; color: #565656; }

.road-btn { position: absolute; left: 1430px; top: 6px; width: 60px; height: 33px; background: #fff; border: 1px solid #3498db; border-radius: 3px; color: #3498db; font-size: 12px; font-weight: 700; line-height: 31px; padding-left: 14px; box-shadow: 0 1px 2px rgba(0,0,0,.2); }

/* detail panel */
.panel { position: absolute; left: 1475px; top: 1px; width: 277px; height: 340px; background: #fff; box-shadow: -3px 0 8px rgba(0,0,0,.3); display: flex; flex-direction: column; }
.panel-head { height: 37px; flex: none; background: #1b63ae; color: #fff; font-size: 13px; font-weight: 500; display: flex; align-items: center; justify-content: space-between; padding: 0 19px 4px 15px; }
.panel-head svg { margin-top: 5px; }
.panel-wrap { flex: 1; min-height: 0; display: flex; }
.panel-body { flex: 1; margin: 0; padding: 12px 0 0 15px; overflow: hidden; line-height: 18px; color: #444; }
.field { display: grid; grid-template-columns: 140px 72px; padding: 8px 0; }
.field dt, .field dd { margin: 0; }
.vscroll { width: 16px; flex: none; background: #f1f1f1; position: relative; }
.vscroll b { position: absolute; left: 2px; top: 17px; width: 13px; height: 118px; background: #c1c1c1; }
.vscroll i { position: absolute; left: 4px; border: 4px solid transparent; }
.vscroll .up { top: 5px; border-top: 0; border-bottom: 4px solid #b5b5b5; }
.vscroll .down { top: 292px; border-bottom: 0; border-top: 4px solid #505050; }

/* plan */
.plan { flex: 1; min-height: 0; margin-left: 2px; display: flex; flex-direction: column; }
.plan-bar { height: 30px; flex: none; background: #1b63ae; color: #fff; display: flex; align-items: center; padding-left: 15px; }
.toggle { width: 29px; height: 15px; border: 1px solid #fff; border-radius: 2px; display: block; position: relative; margin-right: 15px; }
.toggle::before { content: ""; position: absolute; left: 0; top: 0; bottom: 0; width: 15px; background: #fff; }
.toggle i { position: absolute; left: 6px; top: 4px; width: 4px; height: 5px; background: #1b63ae; }
.plan-title { font-size: 13px; margin-top: -2px; }
.plan-tools { margin-left: auto; display: flex; align-items: center; height: 100%; padding-right: 14px; }
.plan-tools .down { margin-right: 7px; }
.all { width: 37px; height: 100%; background: #184a7d; display: flex; align-items: center; justify-content: center; font-size: 12px; }
.density { display: flex; flex-direction: column; justify-content: center; align-items: center; width: 46px; }
.density i { display: block; width: 22px; background: #fff; }
.d1 i { height: 5px; }
.d2 { gap: 3px; }
.d2 i { height: 5px; width: 20px; }
.d3 { gap: 2px; }
.d3 i { height: 5px; }
.d4 { gap: 2px; }
.d4 i { height: 4px; width: 20px; }

.tl-head { height: 24px; flex: none; background: #184a7d; color: #fff; display: flex; }
.tl-left { width: 214px; border-right: 1px solid #fff; font-size: 13.500px; line-height: 21px; padding-left: 15px; }
.tl-hours { height: 24px; flex: none; background: #1b63ae; color: #fff; display: flex; }
.vh-left { width: 214px; flex: none; border-right: 1px solid #fff; display: flex; align-items: center; padding: 0 0 2px 15px; position: relative; font-size: 14px; }
.vh-left span { position: absolute; left: 84px; width: 56px; text-align: center; }
.vh-eye { color: #fff; }
.caret { position: absolute; left: 190px; top: 9px; border: 4.500px solid transparent; border-bottom: 0; border-top: 5px solid #fff; }
.hours { display: flex; padding-left: 51px; align-items: center; font-size: 13px; }
.hours span { width: 100px; flex: none; text-align: center; }

.rows { position: relative; height: 400px; flex: none; }
.row { height: 100px; display: flex; }
.veh { width: 216px; flex: none; border-right: 2px solid #dcdcdc; display: flex; align-items: center; padding-left: 15px; }
.veh-eye { color: #333d4f; flex: none; }
.veh-name { width: 95px; margin-left: 17px; line-height: 18.500px; font-size: 13px; color: #444; margin-top: -1px; }
.veh-ic { color: #343d4e; flex: none; margin-top: -3px; }
.veh-ic.bike { margin-top: -4px; }
.track { flex: 1; padding: 32px 0 0 99px; background: repeating-linear-gradient(90deg, #e9e9e9 0 1px, transparent 1px 100px); }
.route-line { position: relative; display: inline-flex; align-items: center; height: 37px; z-index: 1; }
.route-line::before { content: ""; position: absolute; left: 0; right: 0; top: -18px; height: 26px; border: 1px dashed #3a8f3f; border-bottom: 0; z-index: -1; }
.driver { position: absolute; left: 50%; top: -28px; transform: translateX(-50%); display: flex; align-items: center; gap: 9px; }
.ava { width: 24px; height: 24px; background: #3f4e68; border-radius: 2px; display: block; }
.ava svg { display: block; }
.ava-none { background: #fff; border: 1px solid #c8c8c8; position: relative; }
.ava-none::after { content: ""; position: absolute; left: -3px; top: 10px; width: 30px; height: 1px; background: #bbb; transform: rotate(-48deg); }
.depot { width: 100px; height: 37px; background: #3a8f3f; border-radius: 7px; color: #eaf5ea; font-size: 14px; font-weight: 300; display: flex; align-items: center; justify-content: space-between; padding: 0 9px; flex: none; }
.depot-end { width: 100px; height: 31px; background: #3a8f3f; border-radius: 7px; display: flex; align-items: center; justify-content: center; box-shadow: 0 1px 3px rgba(0,0,0,.15); flex: none; }
.link { display: block; height: 7px; background: #3a8f3f; flex: none; }
.stop { width: 99px; height: 31px; flex: none; background: #fff; border: 1px solid #3a8f3f; border-radius: 7px; color: #3a8f3f; font-size: 14px; font-weight: 300; display: flex; align-items: center; justify-content: center; }

.arrows { position: absolute; left: 0; top: 0; z-index: 2; pointer-events: none; }
.mark { position: absolute; border: 2px solid #f00; z-index: 2; pointer-events: none; }
.m1 { left: 302px; top: 3px; width: 524px; height: 72px; }
.m2 { left: 306px; top: 97px; width: 400px; height: 77px; }
.m3 { left: 301px; top: 201px; width: 401px; height: 70px; }
.m4 { left: 300px; top: 300px; width: 604px; height: 73px; }
.note { position: absolute; z-index: 2; background: #fff; border: 2px solid #f00; color: #f00; font-size: 20px; line-height: 24px; text-align: center; }
.n1 { left: 1015px; top: 41px; width: 398px; height: 27px; line-height: 20px; }
.n2 { left: 1015px; top: 127px; width: 402px; height: 36px; line-height: 28px; }
.n3 { left: 1014px; top: 215px; width: 402px; height: 35px; line-height: 28px; }
.n4 { left: 1014px; top: 313px; width: 399px; height: 56px; padding-top: 1px; }

.hscroll { height: 15px; margin-top: 5px; flex: none; background: #f1f1f1; position: relative; }
.hscroll b { position: absolute; left: 17px; top: 2px; width: 854px; height: 13px; background: #c1c1c1; }
.hscroll i { position: absolute; top: 4px; border: 4px solid transparent; }
.hscroll .h-left { left: 4px; border-left: 0; border-right: 4px solid #a3a3a3; }
.hscroll .h-right { right: 3px; border-right: 0; border-left: 4px solid #505050; }

.stats-bar { flex: 1; display: flex; align-items: center; justify-content: space-between; padding: 6px 0 0 11px; }
.stats { display: flex; gap: 10.700px; font-size: 10px; line-height: 12px; color: #444; }
.stat { display: flex; flex-direction: column; text-align: center; }
.stat sup { font-size: 8px; line-height: 0; }
.actions { display: flex; align-items: flex-end; align-self: flex-end; margin-bottom: 1px; }
.act { height: 28px; border-radius: 15px; color: #fff; font-size: 14px; font-weight: 500; display: flex; align-items: center; justify-content: center; gap: 10px; }
.act-unlock { width: 95px; background: #f4c5ae; box-shadow: 0 0 0 2px #ddd; color: #fbe7dd; margin-right: 13px; }
.act-lock { width: 121px; background: #3a8f3f; box-shadow: 0 0 0 2px #999; margin-right: 12px; }
.act-opt { width: 105px; height: 30px; background: #ffb54a; border-radius: 15px 0 0 15px; }
```
